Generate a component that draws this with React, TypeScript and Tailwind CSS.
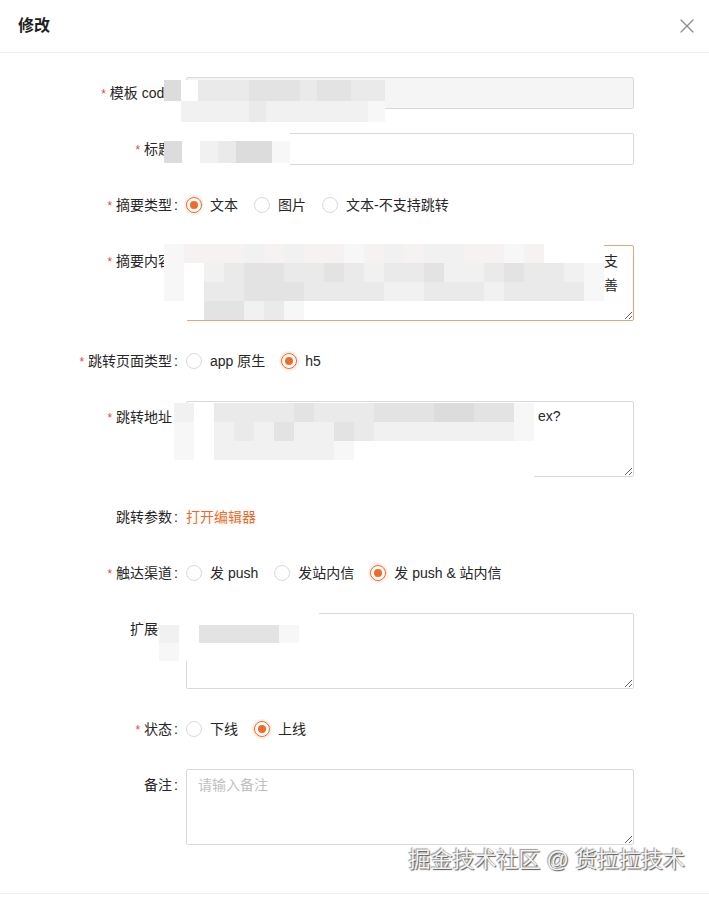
import React from "react";
import { X } from "lucide-react";

const FONT = "[font-family:'Liberation_Sans','Noto_Sans_CJK_SC',sans-serif]";

// pixelated cover blocks used in the screenshot to hide content
const tone: Record<string, string> = {
  "0": "bg-white",
  "1": "bg-[#f7f7f7]",
  "2": "bg-[#f1f1f1]",
  "3": "bg-[#eaeaea]",
  "4": "bg-[#e3e3e3]",
  "5": "bg-[#dcdcdc]",
  p: "bg-[#f7f2f2]",
};

const Mosaic = ({ className, rows, cell }: { className: string; rows: string[]; cell: string }) => (
  <div className={`absolute pointer-events-none flex flex-col ${className}`}>
    {rows.map((r, i) => (
      <div key={i} className="flex">
        {r.split("").map((c, j) => (
          <div key={j} className={`${tone[c]} ${cell}`} />
        ))}
      </div>
    ))}
  </div>
);

const Label = ({ text, required }: { text: string; required?: boolean }) => (
  <div className="w-[186px] shrink-0 h-8 flex items-center justify-end text-sm text-[#262626]">
    {required && <span className="text-[#e2474b] text-xs mr-1 mt-[2px]">*</span>}
    <span>{text}</span>
    <span className="ml-[2px] mr-2">:</span>
  </div>
);

const Radio = ({ label, checked }: { label: string; checked?: boolean }) => (
  <label className="flex items-center mr-2">
    <span
      className={`w-4 h-4 rounded-full border flex items-center justify-center bg-white ${
        checked ? "border-[#ef6b2a] shadow-[0_0_0_2px_rgba(239,107,42,0.12)]" : "border-[#d9d9d9]"
      }`}
    >
      {checked && <span className="w-2 h-2 rounded-full bg-[#ef6b2a]" />}
    </span>
    <span className="px-2 text-sm text-[#262626]">{label}</span>
  </label>
);

const Row = ({ children }: { children: React.ReactNode }) => (
  <div className="relative flex items-start mb-6">{children}</div>
);

const areaCls =
  "block w-full h-[76px] border border-[#d9d9d9] rounded-[2px] px-[11px] py-1 text-sm leading-[22px] text-[#262626] outline-none placeholder:text-[#bfbfbf]";

export default function App() {
  return (
    <div className={`w-[709px] h-[899px] bg-white relative overflow-hidden ${FONT}`}>
      {/* header */}
      <div className="h-[53px] flex items-center justify-between pl-[18px] pr-[10px] border-b border-[#f0f0f0]">
        <h1 className="text-base font-semibold text-[#1f1f1f]">修改</h1>
        <X className="w-6 h-6 text-[#8c8c8c]" strokeWidth={1.2} />
      </div>

      <div className="pt-6 pr-[75px]">
        <Row>
          <Label text="模板 code" required />
          <div className="flex-1 h-8 border border-[#d9d9d9] rounded-[2px] bg-[#f5f5f5]" />
          <Mosaic
            className="left-[164px] top-[3px]"
            cell="w-[17px] h-[21px]"
            rows={["5033344434433", "0222232222221"]}
          />
        </Row>

        <Row>
          <Label text="标题" required />
          <div className="flex-1 h-8 border border-[#d9d9d9] rounded-[2px] bg-white" />
          <Mosaic
            className="left-[164px] top-[-3px]"
            cell="w-[18px] h-[11px]"
            rows={["0000000", "5023551", "5023551", "0000000"]}
          />
        </Row>

        <Row>
          <Label text="摘要类型" required />
          <div className="h-8 flex items-center">
            <Radio label="文本" checked />
            <Radio label="图片" />
            <Radio label="文本-不支持跳转" />
          </div>
        </Row>

        <Row>
          <Label text="摘要内容" required />
          <div className="flex-1 relative">
            <textarea className={`${areaCls} border-[#e8a57c]`} readOnly />
            <span className="absolute right-[16px] top-[4px] text-sm leading-[24px] text-[#262626]">支</span>
            <span className="absolute right-[16px] top-[28px] text-sm leading-[24px] text-[#262626]">善</span>
          </div>
          <Mosaic
            className="left-[164px] top-[-1px]"
            cell="w-[20px] h-[19px]"
            rows={[
              "1ppp2p2pp1p2p22pp1p000",
              "1023443343233422343321",
              "1033444333322333233331",
              "0044231000000000000000",
            ]}
          />
        </Row>

        <Row>
          <Label text="跳转页面类型" required />
          <div className="h-8 flex items-center">
            <Radio label="app 原生" />
            <Radio label="h5" checked />
          </div>
        </Row>

        <Row>
          <Label text="跳转地址" required />
          <div className="flex-1 relative">
            <textarea className={areaCls} readOnly />
            <span className="absolute left-[352px] top-[4px] text-sm leading-[22px] text-[#262626]">ex?</span>
          </div>
          <Mosaic
            className="left-[174px] top-[2px]"
            cell="w-[20px] h-[19px]"
            rows={[
              "203333433344455441",
              "102324224322222221",
              "102222221000000000",
              "000000000000000000",
            ]}
          />
        </Row>

        <Row>
          <Label text="跳转参数" />
          <div className="h-8 flex items-center text-sm text-[#ef6b2a]">打开编辑器</div>
        </Row>

        <Row>
          <Label text="触达渠道" required />
          <div className="h-8 flex items-center">
            <Radio label="发 push" />
            <Radio label="发站内信" />
            <Radio label="发 push & 站内信" checked />
          </div>
        </Row>

        <Row>
          <Label text="扩展值" />
          <textarea className={areaCls} readOnly />
          <Mosaic
            className="left-[159px] top-[-6px]"
            cell="w-[20px] h-[18px]"
            rows={["00000000", "20444410", "10000000"]}
          />
        </Row>

        <Row>
          <Label text="状态" required />
          <div className="h-8 flex items-center">
            <Radio label="下线" />
            <Radio label="上线" checked />
          </div>
        </Row>

        <Row>
          <Label text="备注" />
          <textarea className={areaCls} placeholder="请输入备注" />
        </Row>
      </div>

      {/* watermark */}
      <div className="absolute right-[24px] top-[846px] text-[22px] leading-[28px] text-[#f2f2f2] [text-shadow:1px_1px_1px_#555,-1px_-1px_1px_#999]">
        掘金技术社区 @ 货拉拉技术
      </div>

      <div className="absolute left-0 right-0 top-[893px] border-t border-[#f0f0f0]" />
    </div>
  );
}
